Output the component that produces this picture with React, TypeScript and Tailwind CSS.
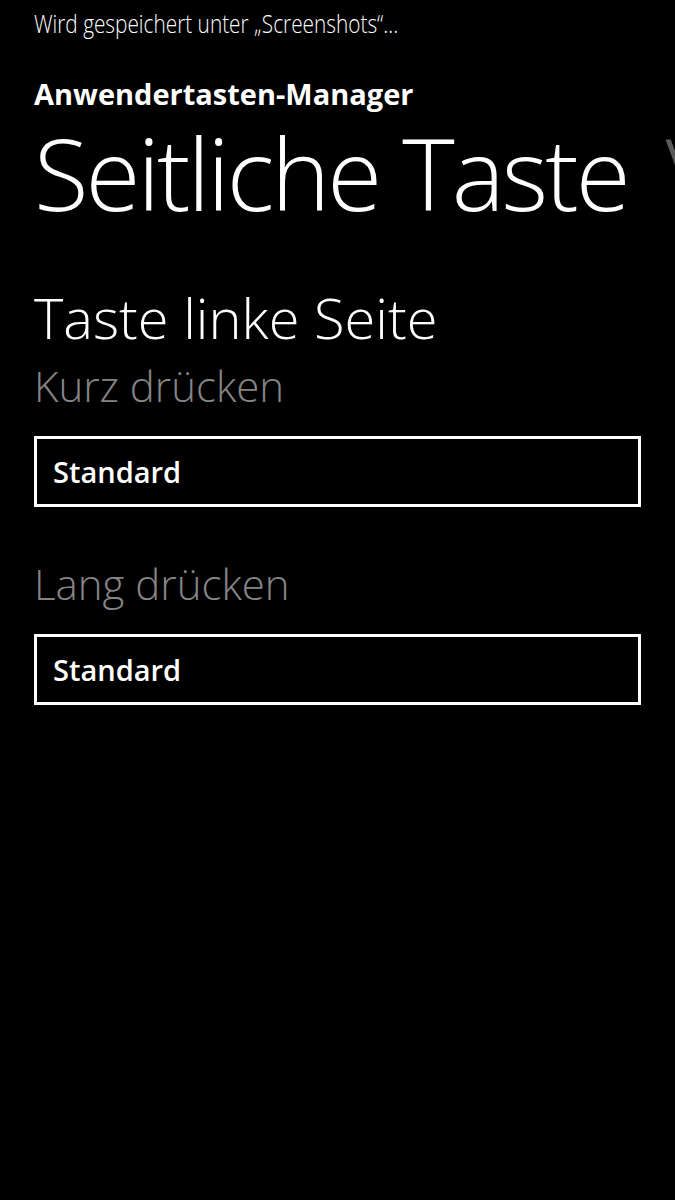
const font = { fontFamily: '"Open Sans", "Noto Sans", sans-serif' };

const Picker = ({ value }: { value: string }) => (
  <div className="mr-[34px] flex h-[71px] items-center border-[3px] border-white px-4">
    <span className="text-[29px] font-semibold leading-none text-white">{value}</span>
  </div>
);

export default function App() {
  return (
    <div className="h-[1200px] w-[675px] overflow-hidden bg-black text-white" style={font}>
      <div className="pl-[34px] pt-[6px]">
        <p className="origin-left scale-x-[0.8] whitespace-nowrap text-[26px] font-light leading-[34px]">
          Wird gespeichert unter „Screenshots“...
        </p>
        <p className="mt-[36px] text-[29px] font-bold leading-[36px]">Anwendertasten-Manager</p>
        <div className="flex whitespace-nowrap">
          <h1 className="text-[100px] font-light leading-[120px] tracking-[-3px]">Seitliche Taste</h1>
          <span className="ml-[38px] text-[100px] font-light leading-[120px] text-[#5a5a5a]">Volume</span>
        </div>
        <h2 className="mt-[50px] text-[56px] font-light leading-[70px]">Taste linke Seite</h2>
        <p className="mt-[8px] text-[42px] font-light leading-[52px] text-[#858585]">Kurz drücken</p>
        <div className="mt-[24px]">
          <Picker value="Standard" />
        </div>
        <p className="mt-[51px] text-[42px] font-light leading-[52px] text-[#858585]">Lang drücken</p>
        <div className="mt-[24px]">
          <Picker value="Standard" />
        </div>
      </div>
    </div>
  );
}
